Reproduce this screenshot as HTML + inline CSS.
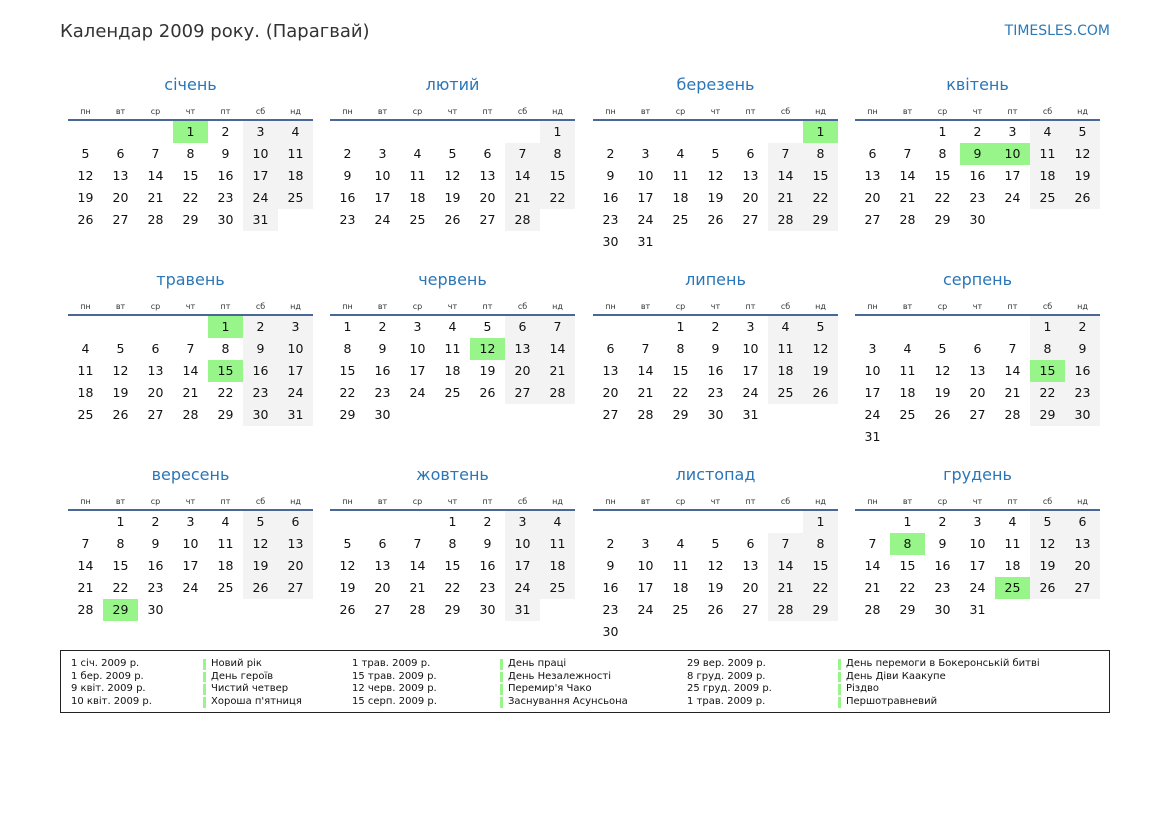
<!DOCTYPE html>
<html><head><meta charset="utf-8"><style>
body{margin:0;width:1169px;height:827px;background:#fff;font-family:"DejaVu Sans","Liberation Sans",sans-serif;color:#111;position:relative;overflow:hidden}
.hd{position:absolute;left:60px;top:21px;font-size:18px;color:#333}
.site{position:absolute;right:59px;top:23px;font-size:14px;color:#2a7ab8}
.m{position:absolute;width:245px}
.t{height:30px;line-height:30px;text-align:center;font-size:16px;color:#2a76b8}
.d{display:flex;height:19px;line-height:23px;font-size:8px;color:#333}
.d span{width:35px;text-align:center}
.ln{height:2px;background:#4a6896}
table{border-collapse:collapse;table-layout:fixed}
td{width:35px;height:22px;padding:0;text-align:center;font-size:12.5px;line-height:22px}
td.w{background:#f3f3f3}
td.h{background:#98f58a}
.lg{position:absolute;left:60px;top:650px;width:1048px;height:61px;border:1px solid #222;font-size:10px;line-height:12.7px}
.c{position:absolute;top:7px;white-space:nowrap}
.c.b div{position:relative;padding-left:8px}
.c.b div:before{content:"";position:absolute;left:0;top:1px;bottom:1px;width:3px;background:#98f58a}
</style></head><body>
<div class="hd">Календар 2009 року. (Парагвай)</div>
<div class="site">TIMESLES.COM</div>

<div class="m" style="left:68px;top:70px"><div class="t">січень</div><div class="d"><span>пн</span><span>вт</span><span>ср</span><span>чт</span><span>пт</span><span>сб</span><span>нд</span></div><div class="ln"></div><table>
<tr><td></td><td></td><td></td><td class="h">1</td><td>2</td><td class="w">3</td><td class="w">4</td></tr>
<tr><td>5</td><td>6</td><td>7</td><td>8</td><td>9</td><td class="w">10</td><td class="w">11</td></tr>
<tr><td>12</td><td>13</td><td>14</td><td>15</td><td>16</td><td class="w">17</td><td class="w">18</td></tr>
<tr><td>19</td><td>20</td><td>21</td><td>22</td><td>23</td><td class="w">24</td><td class="w">25</td></tr>
<tr><td>26</td><td>27</td><td>28</td><td>29</td><td>30</td><td class="w">31</td><td></td></tr>
</table></div>

<div class="m" style="left:330px;top:70px"><div class="t">лютий</div><div class="d"><span>пн</span><span>вт</span><span>ср</span><span>чт</span><span>пт</span><span>сб</span><span>нд</span></div><div class="ln"></div><table>
<tr><td></td><td></td><td></td><td></td><td></td><td></td><td class="w">1</td></tr>
<tr><td>2</td><td>3</td><td>4</td><td>5</td><td>6</td><td class="w">7</td><td class="w">8</td></tr>
<tr><td>9</td><td>10</td><td>11</td><td>12</td><td>13</td><td class="w">14</td><td class="w">15</td></tr>
<tr><td>16</td><td>17</td><td>18</td><td>19</td><td>20</td><td class="w">21</td><td class="w">22</td></tr>
<tr><td>23</td><td>24</td><td>25</td><td>26</td><td>27</td><td class="w">28</td><td></td></tr>
</table></div>

<div class="m" style="left:593px;top:70px"><div class="t">березень</div><div class="d"><span>пн</span><span>вт</span><span>ср</span><span>чт</span><span>пт</span><span>сб</span><span>нд</span></div><div class="ln"></div><table>
<tr><td></td><td></td><td></td><td></td><td></td><td></td><td class="h">1</td></tr>
<tr><td>2</td><td>3</td><td>4</td><td>5</td><td>6</td><td class="w">7</td><td class="w">8</td></tr>
<tr><td>9</td><td>10</td><td>11</td><td>12</td><td>13</td><td class="w">14</td><td class="w">15</td></tr>
<tr><td>16</td><td>17</td><td>18</td><td>19</td><td>20</td><td class="w">21</td><td class="w">22</td></tr>
<tr><td>23</td><td>24</td><td>25</td><td>26</td><td>27</td><td class="w">28</td><td class="w">29</td></tr>
<tr><td>30</td><td>31</td><td></td><td></td><td></td><td></td><td></td></tr>
</table></div>

<div class="m" style="left:855px;top:70px"><div class="t">квітень</div><div class="d"><span>пн</span><span>вт</span><span>ср</span><span>чт</span><span>пт</span><span>сб</span><span>нд</span></div><div class="ln"></div><table>
<tr><td></td><td></td><td>1</td><td>2</td><td>3</td><td class="w">4</td><td class="w">5</td></tr>
<tr><td>6</td><td>7</td><td>8</td><td class="h">9</td><td class="h">10</td><td class="w">11</td><td class="w">12</td></tr>
<tr><td>13</td><td>14</td><td>15</td><td>16</td><td>17</td><td class="w">18</td><td class="w">19</td></tr>
<tr><td>20</td><td>21</td><td>22</td><td>23</td><td>24</td><td class="w">25</td><td class="w">26</td></tr>
<tr><td>27</td><td>28</td><td>29</td><td>30</td><td></td><td></td><td></td></tr>
</table></div>

<div class="m" style="left:68px;top:265px"><div class="t">травень</div><div class="d"><span>пн</span><span>вт</span><span>ср</span><span>чт</span><span>пт</span><span>сб</span><span>нд</span></div><div class="ln"></div><table>
<tr><td></td><td></td><td></td><td></td><td class="h">1</td><td class="w">2</td><td class="w">3</td></tr>
<tr><td>4</td><td>5</td><td>6</td><td>7</td><td>8</td><td class="w">9</td><td class="w">10</td></tr>
<tr><td>11</td><td>12</td><td>13</td><td>14</td><td class="h">15</td><td class="w">16</td><td class="w">17</td></tr>
<tr><td>18</td><td>19</td><td>20</td><td>21</td><td>22</td><td class="w">23</td><td class="w">24</td></tr>
<tr><td>25</td><td>26</td><td>27</td><td>28</td><td>29</td><td class="w">30</td><td class="w">31</td></tr>
</table></div>

<div class="m" style="left:330px;top:265px"><div class="t">червень</div><div class="d"><span>пн</span><span>вт</span><span>ср</span><span>чт</span><span>пт</span><span>сб</span><span>нд</span></div><div class="ln"></div><table>
<tr><td>1</td><td>2</td><td>3</td><td>4</td><td>5</td><td class="w">6</td><td class="w">7</td></tr>
<tr><td>8</td><td>9</td><td>10</td><td>11</td><td class="h">12</td><td class="w">13</td><td class="w">14</td></tr>
<tr><td>15</td><td>16</td><td>17</td><td>18</td><td>19</td><td class="w">20</td><td class="w">21</td></tr>
<tr><td>22</td><td>23</td><td>24</td><td>25</td><td>26</td><td class="w">27</td><td class="w">28</td></tr>
<tr><td>29</td><td>30</td><td></td><td></td><td></td><td></td><td></td></tr>
</table></div>

<div class="m" style="left:593px;top:265px"><div class="t">липень</div><div class="d"><span>пн</span><span>вт</span><span>ср</span><span>чт</span><span>пт</span><span>сб</span><span>нд</span></div><div class="ln"></div><table>
<tr><td></td><td></td><td>1</td><td>2</td><td>3</td><td class="w">4</td><td class="w">5</td></tr>
<tr><td>6</td><td>7</td><td>8</td><td>9</td><td>10</td><td class="w">11</td><td class="w">12</td></tr>
<tr><td>13</td><td>14</td><td>15</td><td>16</td><td>17</td><td class="w">18</td><td class="w">19</td></tr>
<tr><td>20</td><td>21</td><td>22</td><td>23</td><td>24</td><td class="w">25</td><td class="w">26</td></tr>
<tr><td>27</td><td>28</td><td>29</td><td>30</td><td>31</td><td></td><td></td></tr>
</table></div>

<div class="m" style="left:855px;top:265px"><div class="t">серпень</div><div class="d"><span>пн</span><span>вт</span><span>ср</span><span>чт</span><span>пт</span><span>сб</span><span>нд</span></div><div class="ln"></div><table>
<tr><td></td><td></td><td></td><td></td><td></td><td class="w">1</td><td class="w">2</td></tr>
<tr><td>3</td><td>4</td><td>5</td><td>6</td><td>7</td><td class="w">8</td><td class="w">9</td></tr>
<tr><td>10</td><td>11</td><td>12</td><td>13</td><td>14</td><td class="h">15</td><td class="w">16</td></tr>
<tr><td>17</td><td>18</td><td>19</td><td>20</td><td>21</td><td class="w">22</td><td class="w">23</td></tr>
<tr><td>24</td><td>25</td><td>26</td><td>27</td><td>28</td><td class="w">29</td><td class="w">30</td></tr>
<tr><td>31</td><td></td><td></td><td></td><td></td><td></td><td></td></tr>
</table></div>

<div class="m" style="left:68px;top:460px"><div class="t">вересень</div><div class="d"><span>пн</span><span>вт</span><span>ср</span><span>чт</span><span>пт</span><span>сб</span><span>нд</span></div><div class="ln"></div><table>
<tr><td></td><td>1</td><td>2</td><td>3</td><td>4</td><td class="w">5</td><td class="w">6</td></tr>
<tr><td>7</td><td>8</td><td>9</td><td>10</td><td>11</td><td class="w">12</td><td class="w">13</td></tr>
<tr><td>14</td><td>15</td><td>16</td><td>17</td><td>18</td><td class="w">19</td><td class="w">20</td></tr>
<tr><td>21</td><td>22</td><td>23</td><td>24</td><td>25</td><td class="w">26</td><td class="w">27</td></tr>
<tr><td>28</td><td class="h">29</td><td>30</td><td></td><td></td><td></td><td></td></tr>
</table></div>

<div class="m" style="left:330px;top:460px"><div class="t">жовтень</div><div class="d"><span>пн</span><span>вт</span><span>ср</span><span>чт</span><span>пт</span><span>сб</span><span>нд</span></div><div class="ln"></div><table>
<tr><td></td><td></td><td></td><td>1</td><td>2</td><td class="w">3</td><td class="w">4</td></tr>
<tr><td>5</td><td>6</td><td>7</td><td>8</td><td>9</td><td class="w">10</td><td class="w">11</td></tr>
<tr><td>12</td><td>13</td><td>14</td><td>15</td><td>16</td><td class="w">17</td><td class="w">18</td></tr>
<tr><td>19</td><td>20</td><td>21</td><td>22</td><td>23</td><td class="w">24</td><td class="w">25</td></tr>
<tr><td>26</td><td>27</td><td>28</td><td>29</td><td>30</td><td class="w">31</td><td></td></tr>
</table></div>

<div class="m" style="left:593px;top:460px"><div class="t">листопад</div><div class="d"><span>пн</span><span>вт</span><span>ср</span><span>чт</span><span>пт</span><span>сб</span><span>нд</span></div><div class="ln"></div><table>
<tr><td></td><td></td><td></td><td></td><td></td><td></td><td class="w">1</td></tr>
<tr><td>2</td><td>3</td><td>4</td><td>5</td><td>6</td><td class="w">7</td><td class="w">8</td></tr>
<tr><td>9</td><td>10</td><td>11</td><td>12</td><td>13</td><td class="w">14</td><td class="w">15</td></tr>
<tr><td>16</td><td>17</td><td>18</td><td>19</td><td>20</td><td class="w">21</td><td class="w">22</td></tr>
<tr><td>23</td><td>24</td><td>25</td><td>26</td><td>27</td><td class="w">28</td><td class="w">29</td></tr>
<tr><td>30</td><td></td><td></td><td></td><td></td><td></td><td></td></tr>
</table></div>

<div class="m" style="left:855px;top:460px"><div class="t">грудень</div><div class="d"><span>пн</span><span>вт</span><span>ср</span><span>чт</span><span>пт</span><span>сб</span><span>нд</span></div><div class="ln"></div><table>
<tr><td></td><td>1</td><td>2</td><td>3</td><td>4</td><td class="w">5</td><td class="w">6</td></tr>
<tr><td>7</td><td class="h">8</td><td>9</td><td>10</td><td>11</td><td class="w">12</td><td class="w">13</td></tr>
<tr><td>14</td><td>15</td><td>16</td><td>17</td><td>18</td><td class="w">19</td><td class="w">20</td></tr>
<tr><td>21</td><td>22</td><td>23</td><td>24</td><td class="h">25</td><td class="w">26</td><td class="w">27</td></tr>
<tr><td>28</td><td>29</td><td>30</td><td>31</td><td></td><td></td><td></td></tr>
</table></div>

<div class="lg">
<div class="c" style="left:10px"><div>1 січ. 2009 р.</div><div>1 бер. 2009 р.</div><div>9 квіт. 2009 р.</div><div>10 квіт. 2009 р.</div></div>
<div class="c b" style="left:142px"><div>Новий рік</div><div>День героїв</div><div>Чистий четвер</div><div>Хороша п'ятниця</div></div>
<div class="c" style="left:291px"><div>1 трав. 2009 р.</div><div>15 трав. 2009 р.</div><div>12 черв. 2009 р.</div><div>15 серп. 2009 р.</div></div>
<div class="c b" style="left:439px"><div>День праці</div><div>День Незалежності</div><div>Перемир'я Чако</div><div>Заснування Асунсьона</div></div>
<div class="c" style="left:626px"><div>29 вер. 2009 р.</div><div>8 груд. 2009 р.</div><div>25 груд. 2009 р.</div><div>1 трав. 2009 р.</div></div>
<div class="c b" style="left:777px"><div>День перемоги в Бокеронській битві</div><div>День Діви Каакупе</div><div>Різдво</div><div>Першотравневий</div></div>
</div>
</body></html>
